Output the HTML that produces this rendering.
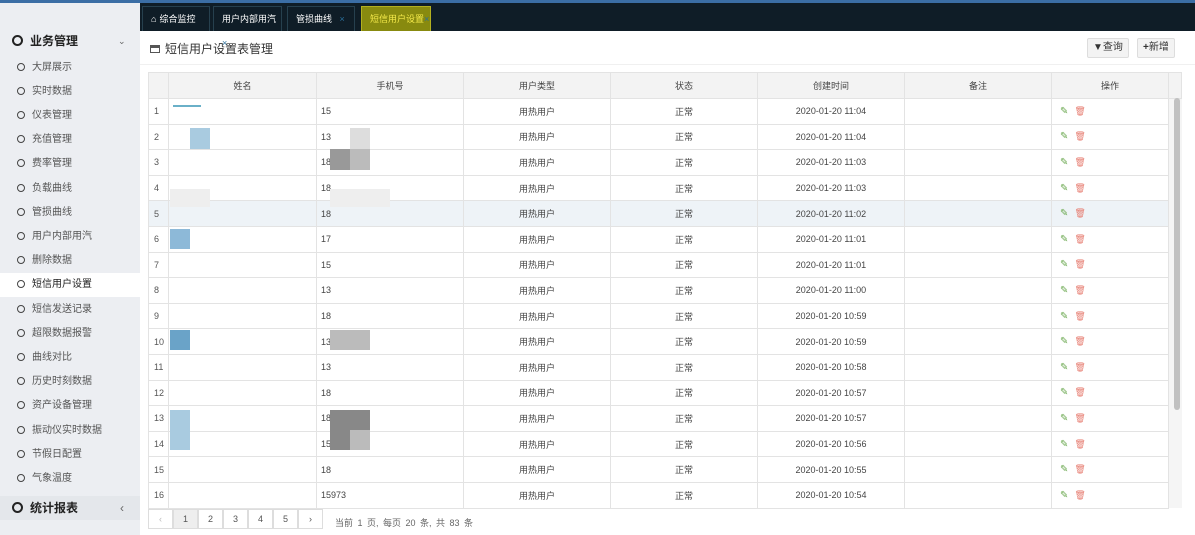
<!DOCTYPE html>
<html><head><meta charset="utf-8"><style>
*{box-sizing:border-box;margin:0;padding:0}
body{width:1195px;height:535px;overflow:hidden;background:#fff;font-family:"Liberation Sans","Noto Sans CJK SC",sans-serif;font-size:10px;color:#333;position:relative}
.abs{position:absolute}
#top{left:0;top:0;width:1195px;height:3px;background:#3b6ea5}
#side{left:0;top:3px;width:140px;height:532px;background:#eceef2}
#tabs{left:140px;top:3px;width:1055px;height:28px;background:#0f1d27}
.tab{position:absolute;top:3px;height:25px;border:1px solid #26404e;border-bottom:none;color:#fff;font-size:9px;line-height:24px;padding-left:8px}
.si{position:absolute;left:0;width:140px;height:24px;line-height:24px;font-size:10px;color:#555;padding-left:17px}
.si:before{content:"";display:inline-block;width:6px;height:6px;border:1.5px solid #444;border-radius:50%;margin-right:7px;vertical-align:-1px}
.sh{font-size:12px;font-weight:bold;color:#222;padding-left:12px}
.sh:before{width:7px;height:7px;border-width:2px;border-color:#222}
table{position:absolute;left:148px;top:72px;border-collapse:collapse;table-layout:fixed;font-size:9px;color:#444}
td,th{border:1px solid #e3e3e3;height:25.6px;text-align:center;font-weight:normal;overflow:hidden;white-space:nowrap}
th{background:#f3f3f3;height:26px}
td.n{text-align:left;padding-left:5px;color:#555}
td.p{text-align:left;padding-left:4px}
.op{text-align:left;padding-left:8px}
.pen{color:#6aa84f;font-size:10px}
.bin{color:#e67a6e;font-size:9px;margin-left:6px}
.btn{position:absolute;top:38px;height:20px;border:1px solid #ddd;background:#f3f3f3;font-size:10px;line-height:18px;padding:0 5px;border-radius:2px;color:#333}
.pg{position:absolute;top:509px;height:20px;width:25px;border:1px solid #ddd;text-align:center;line-height:18px;font-size:9px;color:#555;background:#fff}
</style></head><body>
<div class="abs" id="side"></div>
<div class="abs" id="top"></div>
<div class="abs" id="tabs">
<div class="tab" style="left:2px;width:68px">&#8962;<span style="margin-left:3px">综合监控</span></div>
<div class="tab" style="left:73px;width:69px">用户内部用汽<span style="color:#2a6f9a">×</span></div>
<div class="tab" style="left:147px;width:68px">管损曲线 &nbsp; <span style="color:#2a6f9a">×</span></div>
<div class="tab" style="left:221px;width:70px;background:#888a0f;border-color:#b3b020;color:#f4e94a">短信用户设置<span style="color:#2a6f9a">×</span></div>
</div>
<div class="si sh" style="top:29px">业务管理<span style="position:absolute;left:118px;font-weight:normal;font-size:9px;color:#666">&#8964;</span></div>
<div class="si" style="top:56px">大屏展示</div>
<div class="si" style="top:80px">实时数据</div>
<div class="si" style="top:104px">仪表管理</div>
<div class="si" style="top:128px">充值管理</div>
<div class="si" style="top:152px">费率管理</div>
<div class="si" style="top:177px">负载曲线</div>
<div class="si" style="top:201px">管损曲线</div>
<div class="si" style="top:225px">用户内部用汽</div>
<div class="si" style="top:249px">删除数据</div>
<div class="si" style="top:273px;background:#fff;color:#222">短信用户设置</div>
<div class="si" style="top:298px">短信发送记录</div>
<div class="si" style="top:322px">超限数据报警</div>
<div class="si" style="top:346px">曲线对比</div>
<div class="si" style="top:370px">历史时刻数据</div>
<div class="si" style="top:394px">资产设备管理</div>
<div class="si" style="top:419px">振动仪实时数据</div>
<div class="si" style="top:443px">节假日配置</div>
<div class="si" style="top:467px">气象温度</div>
<div class="si sh" style="top:496px;background:#e4e7eb">统计报表<span style="position:absolute;left:120px;font-weight:normal;color:#666">&lsaquo;</span></div>

<div class="abs" style="left:150px;top:40px;font-size:12px;color:#333"><span style="display:inline-block;width:10px;height:8px;border:1.5px solid #555;border-top-width:3px;margin-right:5px;vertical-align:0"></span>短信用户设置表管理</div>
<div class="btn" style="left:1087px">&#9660;查询</div>
<div class="btn" style="left:1137px"><b>+</b>新增</div>
<div class="abs" style="left:140px;top:64px;width:1055px;height:1px;background:#f0f0f0"></div>

<table>
<colgroup><col style="width:20px"><col style="width:148px"><col style="width:147px"><col style="width:147px"><col style="width:147px"><col style="width:147px"><col style="width:147px"><col style="width:117px"><col style="width:13px"></colgroup>
<tr><th></th><th>姓名</th><th>手机号</th><th>用户类型</th><th>状态</th><th>创建时间</th><th>备注</th><th>操作</th><th></th></tr>
<tr><td class="n">1</td><td></td><td class="p">15</td><td>用热用户</td><td>正常</td><td>2020-01-20 11:04</td><td></td><td class="op"><span class="pen">&#9998;</span><span class="bin">&#128465;</span></td><td rowspan="16" style="border:none;background:#f5f5f5"></td></tr>
<tr><td class="n">2</td><td></td><td class="p">13</td><td>用热用户</td><td>正常</td><td>2020-01-20 11:04</td><td></td><td class="op"><span class="pen">&#9998;</span><span class="bin">&#128465;</span></td></tr>
<tr><td class="n">3</td><td></td><td class="p">18</td><td>用热用户</td><td>正常</td><td>2020-01-20 11:03</td><td></td><td class="op"><span class="pen">&#9998;</span><span class="bin">&#128465;</span></td></tr>
<tr><td class="n">4</td><td></td><td class="p">18</td><td>用热用户</td><td>正常</td><td>2020-01-20 11:03</td><td></td><td class="op"><span class="pen">&#9998;</span><span class="bin">&#128465;</span></td></tr>
<tr style="background:#eef3f7"><td class="n">5</td><td></td><td class="p">18</td><td>用热用户</td><td>正常</td><td>2020-01-20 11:02</td><td></td><td class="op"><span class="pen">&#9998;</span><span class="bin">&#128465;</span></td></tr>
<tr><td class="n">6</td><td></td><td class="p">17</td><td>用热用户</td><td>正常</td><td>2020-01-20 11:01</td><td></td><td class="op"><span class="pen">&#9998;</span><span class="bin">&#128465;</span></td></tr>
<tr><td class="n">7</td><td></td><td class="p">15</td><td>用热用户</td><td>正常</td><td>2020-01-20 11:01</td><td></td><td class="op"><span class="pen">&#9998;</span><span class="bin">&#128465;</span></td></tr>
<tr><td class="n">8</td><td></td><td class="p">13</td><td>用热用户</td><td>正常</td><td>2020-01-20 11:00</td><td></td><td class="op"><span class="pen">&#9998;</span><span class="bin">&#128465;</span></td></tr>
<tr><td class="n">9</td><td></td><td class="p">18</td><td>用热用户</td><td>正常</td><td>2020-01-20 10:59</td><td></td><td class="op"><span class="pen">&#9998;</span><span class="bin">&#128465;</span></td></tr>
<tr><td class="n">10</td><td></td><td class="p">13</td><td>用热用户</td><td>正常</td><td>2020-01-20 10:59</td><td></td><td class="op"><span class="pen">&#9998;</span><span class="bin">&#128465;</span></td></tr>
<tr><td class="n">11</td><td></td><td class="p">13</td><td>用热用户</td><td>正常</td><td>2020-01-20 10:58</td><td></td><td class="op"><span class="pen">&#9998;</span><span class="bin">&#128465;</span></td></tr>
<tr><td class="n">12</td><td></td><td class="p">18</td><td>用热用户</td><td>正常</td><td>2020-01-20 10:57</td><td></td><td class="op"><span class="pen">&#9998;</span><span class="bin">&#128465;</span></td></tr>
<tr><td class="n">13</td><td></td><td class="p">18</td><td>用热用户</td><td>正常</td><td>2020-01-20 10:57</td><td></td><td class="op"><span class="pen">&#9998;</span><span class="bin">&#128465;</span></td></tr>
<tr><td class="n">14</td><td></td><td class="p">15</td><td>用热用户</td><td>正常</td><td>2020-01-20 10:56</td><td></td><td class="op"><span class="pen">&#9998;</span><span class="bin">&#128465;</span></td></tr>
<tr><td class="n">15</td><td></td><td class="p">18</td><td>用热用户</td><td>正常</td><td>2020-01-20 10:55</td><td></td><td class="op"><span class="pen">&#9998;</span><span class="bin">&#128465;</span></td></tr>
<tr><td class="n">16</td><td></td><td class="p">15973</td><td>用热用户</td><td>正常</td><td>2020-01-20 10:54</td><td></td><td class="op"><span class="pen">&#9998;</span><span class="bin">&#128465;</span></td></tr>
</table>
<div class="abs" style="left:1174px;top:98px;width:6px;height:312px;background:#c1c1c1;border-radius:3px"></div>

<div class="abs" style="left:173px;top:105px;width:28px;height:2px;background:#6ab0c8"></div>
<div class="abs" style="left:190px;top:128px;width:20px;height:21px;background:#a9cbe0"></div>
<div class="abs" style="left:350px;top:128px;width:20px;height:21px;background:#ddd"></div>
<div class="abs" style="left:330px;top:149px;width:20px;height:21px;background:#999"></div>
<div class="abs" style="left:350px;top:149px;width:20px;height:21px;background:#bbb"></div>
<div class="abs" style="left:170px;top:189px;width:40px;height:18px;background:#eee"></div>
<div class="abs" style="left:330px;top:189px;width:60px;height:18px;background:#eee"></div>
<div class="abs" style="left:170px;top:229px;width:20px;height:20px;background:#8db9d8"></div>
<div class="abs" style="left:170px;top:330px;width:20px;height:20px;background:#6aa3c8"></div>
<div class="abs" style="left:330px;top:330px;width:40px;height:20px;background:#bbb"></div>
<div class="abs" style="left:170px;top:410px;width:20px;height:40px;background:#a9cbe0"></div>
<div class="abs" style="left:330px;top:410px;width:40px;height:20px;background:#888"></div>
<div class="abs" style="left:330px;top:430px;width:20px;height:20px;background:#888"></div>
<div class="abs" style="left:350px;top:430px;width:20px;height:20px;background:#bbb"></div>

<div class="pg" style="left:148px;color:#bbb">&lsaquo;</div>
<div class="pg" style="left:173px;background:#eee">1</div>
<div class="pg" style="left:198px">2</div>
<div class="pg" style="left:223px">3</div>
<div class="pg" style="left:248px">4</div>
<div class="pg" style="left:273px">5</div>
<div class="pg" style="left:298px">&rsaquo;</div>
<div class="abs" style="left:335px;top:516px;font-size:9px;color:#666;word-spacing:2px">当前 1 页, 每页 20 条, 共 83 条</div>
</body></html>
